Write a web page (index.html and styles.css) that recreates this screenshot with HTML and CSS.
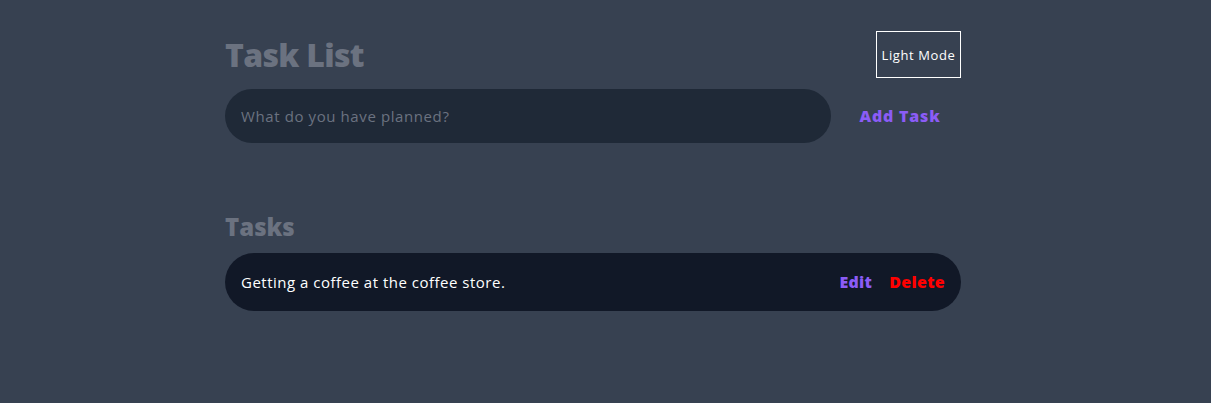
FILE: index.html
```html
<!DOCTYPE html>
<html>
<head>
<meta charset="utf-8">
<link rel="stylesheet" href="styles.css">
</head>
<body>
<main class="app">
  <header class="header">
    <h1 class="title">Task List</h1>
    <button class="mode-btn">Light Mode</button>
  </header>
  <form class="new-task">
    <input class="task-input" type="text" placeholder="What do you have planned?">
    <button class="add-btn" type="button">Add Task</button>
  </form>
  <section class="tasks">
    <h2 class="tasks-title">Tasks</h2>
    <div class="task">
      <span class="task-text">Getting a coffee at the coffee store.</span>
      <div class="actions">
        <button class="edit">Edit</button>
        <button class="delete">Delete</button>
      </div>
    </div>
  </section>
</main>
</body>
</html>
```
FILE: styles.css
```css
html, body {
  margin: 0;
  padding: 0;
  background: #374151;
  font-family: "Open Sans", "Noto Sans", sans-serif;
}
.app {
  width: 736px;
  margin-left: 225px;
  padding-top: 31px;
}
.header {
  display: flex;
  justify-content: space-between;
  align-items: center;
  height: 47px;
}
.title {
  margin: 0;
  font-size: 32px;
  font-weight: 800;
  color: #6b7280;
  letter-spacing: -0.7px;
}
.mode-btn {
  width: 85px;
  height: 47px;
  background: transparent;
  border: 1px solid #ffffff;
  color: #ffffff;
  font-family: inherit;
  font-size: 13px;
  letter-spacing: 0.6px;
  padding: 0;
}
.new-task {
  display: flex;
  align-items: center;
  margin-top: 11px;
}
.task-input {
  width: 606px;
  height: 54px;
  box-sizing: border-box;
  border: none;
  border-radius: 27px;
  background: #1f2937;
  padding: 0 16px;
  font-family: inherit;
  font-size: 15px;
  letter-spacing: 0.6px;
  color: #fff;
  outline: none;
}
.task-input::placeholder {
  color: #6b7280;
}
.add-btn {
  flex: 1;
  background: none;
  border: none;
  color: #8b5cf6;
  font-family: inherit;
  font-weight: 800;
  font-size: 16px;
  letter-spacing: 0.8px;
  padding: 0 0 0 8px;
}
.tasks {
  margin-top: 70px;
}
.tasks-title {
  margin: 0;
  font-size: 24px;
  font-weight: 800;
  color: #6b7280;
  line-height: 28px;
}
.task {
  margin-top: 12px;
  display: flex;
  align-items: center;
  justify-content: space-between;
  height: 58px;
  border-radius: 29px;
  background: #111827;
  padding: 0 16px;
}
.task-text {
  color: #ffffff;
  font-size: 15px;
  letter-spacing: 0.5px;
}
.actions {
  display: flex;
  gap: 17px;
}
.actions button {
  background: none;
  border: none;
  padding: 0;
  font-family: inherit;
  font-weight: 800;
  font-size: 16px;
  letter-spacing: 0.3px;
}
.edit { color: #8b5cf6; }
.delete { color: #ff0000; }
```
